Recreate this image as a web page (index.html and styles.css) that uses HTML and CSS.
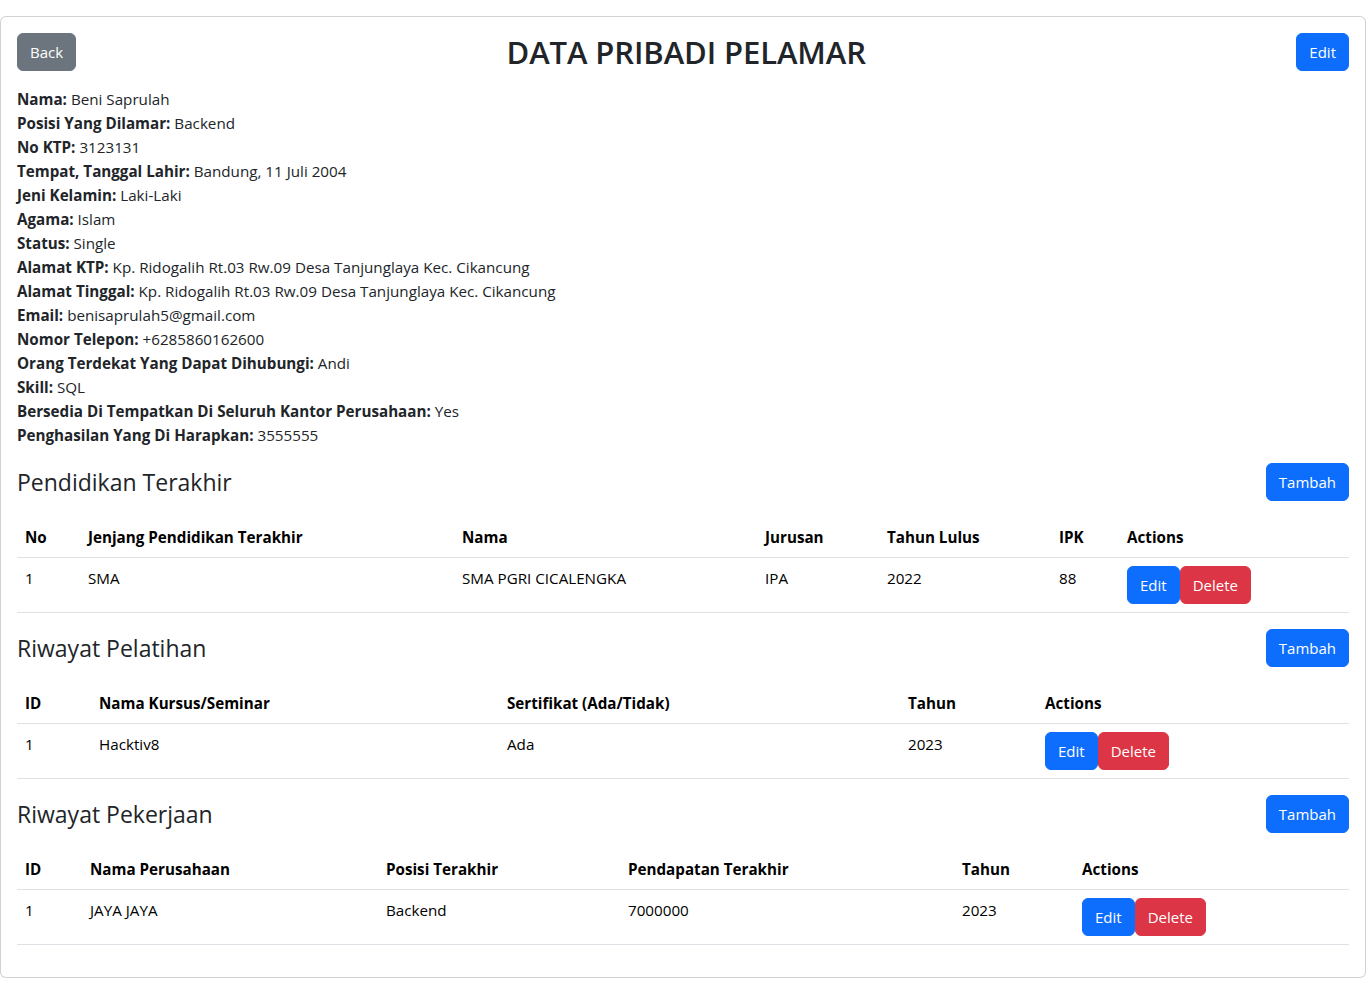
FILE: index.html
```html
<!DOCTYPE html>
<html lang="id">
<head>
<meta charset="utf-8">
<title>Data Pribadi Pelamar</title>
<link rel="stylesheet" href="styles.css">
</head>
<body>
<div class="card">
  <div class="card-body">
    <div class="head-row">
      <a class="btn btn-secondary">Back</a>
      <h2 class="page-title">DATA PRIBADI PELAMAR</h2>
      <a class="btn btn-primary">Edit</a>
    </div>

    <div class="info">
      <p><strong>Nama:</strong> Beni Saprulah</p>
      <p><strong>Posisi Yang Dilamar:</strong> Backend</p>
      <p><strong>No KTP:</strong> 3123131</p>
      <p><strong>Tempat, Tanggal Lahir:</strong> Bandung, 11 Juli 2004</p>
      <p><strong>Jeni Kelamin:</strong> Laki-Laki</p>
      <p><strong>Agama:</strong> Islam</p>
      <p><strong>Status:</strong> Single</p>
      <p><strong>Alamat KTP:</strong> Kp. Ridogalih Rt.03 Rw.09 Desa Tanjunglaya Kec. Cikancung</p>
      <p><strong>Alamat Tinggal:</strong> Kp. Ridogalih Rt.03 Rw.09 Desa Tanjunglaya Kec. Cikancung</p>
      <p><strong>Email:</strong> benisaprulah5@gmail.com</p>
      <p><strong>Nomor Telepon:</strong> +6285860162600</p>
      <p><strong>Orang Terdekat Yang Dapat Dihubungi:</strong> Andi</p>
      <p><strong>Skill:</strong> SQL</p>
      <p><strong>Bersedia Di Tempatkan Di Seluruh Kantor Perusahaan:</strong> Yes</p>
      <p><strong>Penghasilan Yang Di Harapkan:</strong> 3555555</p>
    </div>

    <div class="section-row">
      <h4 class="section-title">Pendidikan Terakhir</h4>
      <a class="btn btn-primary">Tambah</a>
    </div>
    <table class="table t-edu">
      <colgroup>
        <col class="w63"><col class="w374"><col class="w303"><col class="w122"><col class="w172"><col class="w68"><col>
      </colgroup>
      <thead>
        <tr><th>No</th><th>Jenjang Pendidikan Terakhir</th><th>Nama</th><th>Jurusan</th><th>Tahun Lulus</th><th>IPK</th><th>Actions</th></tr>
      </thead>
      <tbody>
        <tr><td>1</td><td>SMA</td><td>SMA PGRI CICALENGKA</td><td>IPA</td><td>2022</td><td>88</td><td><a class="btn btn-primary">Edit</a><a class="btn btn-danger">Delete</a></td></tr>
      </tbody>
    </table>

    <div class="section-row">
      <h4 class="section-title">Riwayat Pelatihan</h4>
      <a class="btn btn-primary">Tambah</a>
    </div>
    <table class="table t-train">
      <colgroup>
        <col class="w74"><col class="w408"><col class="w401"><col class="w137"><col>
      </colgroup>
      <thead>
        <tr><th>ID</th><th>Nama Kursus/Seminar</th><th>Sertifikat (Ada/Tidak)</th><th>Tahun</th><th>Actions</th></tr>
      </thead>
      <tbody>
        <tr><td>1</td><td>Hacktiv8</td><td>Ada</td><td>2023</td><td><a class="btn btn-primary">Edit</a><a class="btn btn-danger">Delete</a></td></tr>
      </tbody>
    </table>

    <div class="section-row">
      <h4 class="section-title">Riwayat Pekerjaan</h4>
      <a class="btn btn-primary">Tambah</a>
    </div>
    <table class="table t-work">
      <colgroup>
        <col class="w65"><col class="w296"><col class="w242"><col class="w334"><col class="w120"><col>
      </colgroup>
      <thead>
        <tr><th>ID</th><th>Nama Perusahaan</th><th>Posisi Terakhir</th><th>Pendapatan Terakhir</th><th>Tahun</th><th>Actions</th></tr>
      </thead>
      <tbody>
        <tr><td>1</td><td>JAYA JAYA</td><td>Backend</td><td>7000000</td><td>2023</td><td><a class="btn btn-primary">Edit</a><a class="btn btn-danger">Delete</a></td></tr>
      </tbody>
    </table>
  </div>
</div>
</body>
</html>
```

FILE: styles.css
```css
* { box-sizing: border-box; }

body {
  margin: 0;
  font-family: "Open Sans", "Noto Sans", sans-serif;
  font-size: 15.2px;
  line-height: 24px;
  color: #212529;
  background: #fff;
}

.card {
  margin-top: 16px;
  border: 1px solid rgba(0, 0, 0, 0.175);
  border-radius: 6px;
  background: #fff;
}

.card-body {
  padding: 16px;
}

.head-row,
.section-row {
  display: flex;
  justify-content: space-between;
  align-items: center;
  margin-bottom: 16px;
}

.page-title {
  margin: 0;
  font-size: 31px;
  font-weight: 600;
  line-height: 38px;
  letter-spacing: -0.1px;
}

.section-title {
  margin: 0;
  font-size: 23px;
  font-weight: 400;
  line-height: 28px;
}

.info {
  margin-bottom: 16px;
}

.info p {
  margin: 0;
}

.info strong {
  font-weight: 700;
}

.btn {
  display: inline-block;
  padding: 6px 12px;
  font-size: 15px;
  line-height: 24px;
  border: 1px solid transparent;
  border-radius: 6px;
  color: #fff;
  text-decoration: none;
  cursor: pointer;
  vertical-align: middle;
}

.btn-secondary { background: #6c757d; border-color: #6c757d; }
.btn-primary { background: #0d6efd; border-color: #0d6efd; }
.btn-danger { background: #dc3545; border-color: #dc3545; }

.table {
  width: 100%;
  table-layout: fixed;
  border-collapse: collapse;
  margin-bottom: 16px;
  color: #000;
}

.table th,
.table td {
  padding: 8px;
  text-align: left;
  border-bottom: 1px solid #dee2e6;
  vertical-align: top;
}

.table th {
  font-weight: 700;
}

.table td {
  white-space: nowrap;
}

.w63 { width: 63px; }
.w374 { width: 374px; }
.w303 { width: 303px; }
.w122 { width: 122px; }
.w172 { width: 172px; }
.w68 { width: 68px; }
.w74 { width: 74px; }
.w408 { width: 408px; }
.w401 { width: 401px; }
.w137 { width: 137px; }
.w65 { width: 65px; }
.w296 { width: 296px; }
.w242 { width: 242px; }
.w334 { width: 334px; }
.w120 { width: 120px; }
```
